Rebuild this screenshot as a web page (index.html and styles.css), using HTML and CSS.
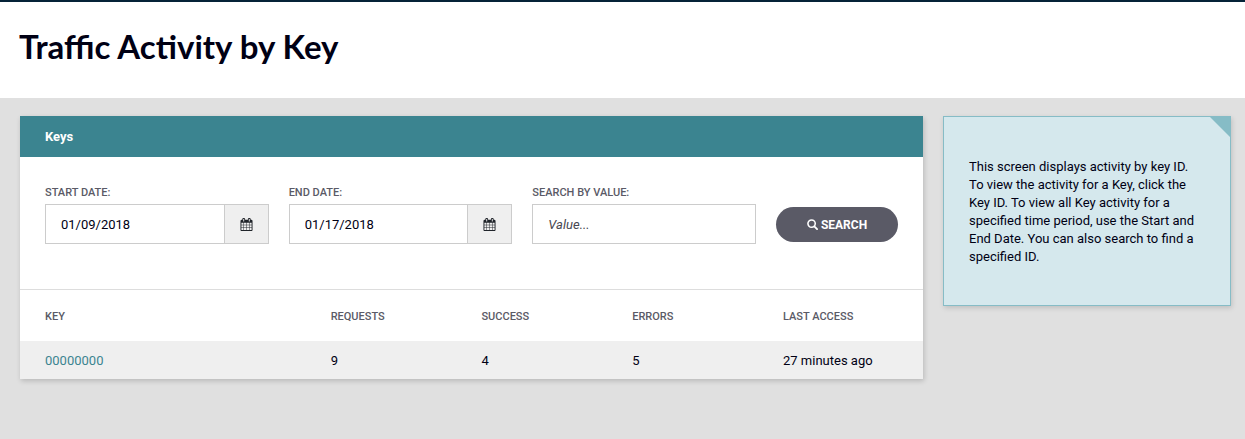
FILE: index.html
```html
<!DOCTYPE html>
<html lang="en">
<head>
<meta charset="utf-8">
<meta name="viewport" content="width=device-width, initial-scale=1">
<title>Traffic Activity by Key</title>
<link rel="stylesheet" href="styles.css">
</head>
<body>
<svg class="sprite" aria-hidden="true">
  <symbol id="calendar" viewBox="0 0 1664 1792">
    <path fill="currentColor" d="M128 1664h288v-288h-288v288zM480 1664h320v-288h-320v288zM128 1312h288v-320h-288v320zM480 1312h320v-320h-320v320zM128 928h288v-288h-288v288zM864 1664h320v-288h-320v288zM480 928h320v-288h-320v288zM1248 1664h288v-288h-288v288zM864 1312h320v-320h-320v320zM512 448v-288q0-13-9.500-22.500t-22.500-9.500h-64q-13 0-22.500 9.500t-9.500 22.500v288q0 13 9.500 22.500t22.500 9.500h64q13 0 22.500-9.500t9.500-22.500zM1248 1312h288v-320h-288v320zM864 928h320v-288h-320v288zM1248 928h288v-288h-288v288zM1280 448v-288q0-13-9.500-22.500t-22.500-9.500h-64q-13 0-22.500 9.500t-9.500 22.500v288q0 13 9.500 22.500t22.500 9.500h64q13 0 22.500-9.500t9.500-22.500zM1664 384v1280q0 52-38 90t-90 38h-1408q-52 0-90-38t-38-90v-1280q0-52 38-90t90-38h128v-96q0-66 47-113t113-47h64q66 0 113 47t47 113v96h384v-96q0-66 47-113t113-47h64q66 0 113 47t47 113v96h128q52 0 90 38t38 90z"/>
  </symbol>
</svg>
<header class="page-header">
  <h1 class="page-title">Traffic Activity by Key</h1>
</header>
<main class="content">
  <section class="card">
    <h2 class="card-title">Keys</h2>
    <form class="filters">
      <div class="field">
        <label class="field-label" for="start">START DATE:</label>
        <div class="input-box">
          <input class="field-input" id="start" type="text" value="01/09/2018">
          <button class="date-button" type="button" aria-label="Choose start date"><svg class="calendar-icon"><use href="#calendar"/></svg></button>
        </div>
      </div>
      <div class="field">
        <label class="field-label" for="end">END DATE:</label>
        <div class="input-box">
          <input class="field-input" id="end" type="text" value="01/17/2018">
          <button class="date-button" type="button" aria-label="Choose end date"><svg class="calendar-icon"><use href="#calendar"/></svg></button>
        </div>
      </div>
      <div class="field">
        <label class="field-label" for="value">SEARCH BY VALUE:</label>
        <div class="input-box">
          <input class="field-input" id="value" type="text" placeholder="Value...">
        </div>
      </div>
      <button class="search-button" type="submit">
        <svg class="search-icon" viewBox="0 0 12 12" aria-hidden="true"><circle cx="5" cy="5" r="4" fill="none" stroke="currentColor" stroke-width="1.700"/><path d="M8 8l3 3" stroke="currentColor" stroke-width="2" stroke-linecap="round"/></svg>
        <span>SEARCH</span>
      </button>
    </form>
    <table class="keys-table">
      <thead>
        <tr><th class="col-key" scope="col">KEY</th><th class="col-count" scope="col">REQUESTS</th><th class="col-count" scope="col">SUCCESS</th><th class="col-count" scope="col">ERRORS</th><th scope="col">LAST ACCESS</th></tr>
      </thead>
      <tbody>
        <tr><td class="col-key"><a class="key-link" href="#">00000000</a></td><td>9</td><td>4</td><td>5</td><td>27 minutes ago</td></tr>
      </tbody>
    </table>
  </section>
  <aside class="note">
    <p class="note-text">This screen displays activity by key ID. To view the activity for a Key, click the Key ID. To view all Key activity for a specified time period, use the Start and End Date. You can also search to find a specified ID.</p>
  </aside>
</main>
</body>
</html>
```
FILE: styles.css
```css
* {
  box-sizing: border-box;
}

body {
  margin: 0;
  min-height: 100vh;
  background: #e0e0e0;
  color: #000014;
  font: 13px/18px Roboto, "Liberation Sans", sans-serif;
}

.sprite {
  display: none;
}

.page-header {
  padding: 23px 19px 31px;
  border-top: 2px solid #052338;
  background: #fff;
}

.page-title {
  margin: 0;
  font: 700 33px/42px Lato, sans-serif;
}

.content {
  display: grid;
  grid-template-columns: minmax(0, 1fr) 288px;
  gap: 20px;
  align-items: start;
  padding: 18px 14px 18px 20px;
}

.card {
  background: #fff;
  box-shadow: 1px 2px 5px rgba(0, 0, 0, 0.18);
}

.card-title {
  margin: 0;
  padding: 12px 25px 11px;
  background: #3b8490;
  color: #fff;
  font-size: 13px;
  font-weight: 700;
  line-height: 18px;
}

.filters {
  display: grid;
  grid-template-columns: repeat(3, minmax(0, 1fr)) 122px;
  gap: 20px;
  align-items: end;
  padding: 27px 25px 45px;
}

.field {
  display: flex;
  flex-direction: column;
  gap: 2px;
}

.field-label {
  color: #5a5a66;
  font-size: 11px;
  font-weight: 500;
}

.input-box {
  display: flex;
  height: 40px;
  border: 1px solid #ccc;
}

.field-input {
  flex: 1;
  min-width: 0;
  padding: 2px 15px 0;
  border: 0;
  background: #fff;
  color: #000014;
  font: inherit;
}

.field-input::placeholder {
  color: #484850;
  font-style: italic;
  opacity: 1;
}

.date-button {
  display: flex;
  align-items: center;
  justify-content: center;
  width: 44px;
  padding: 0;
  border: 0;
  border-left: 1px solid #ccc;
  background: #efefef;
  color: #20242a;
}

.calendar-icon {
  width: 13px;
  height: 13px;
}

.search-button {
  display: flex;
  align-items: center;
  justify-content: center;
  gap: 3px;
  height: 35px;
  margin-bottom: 2px;
  border: 0;
  border-radius: 18px;
  background: #5a5a66;
  color: #fff;
  font: 700 12px/18px Roboto, sans-serif;
}

.search-icon {
  width: 11px;
  height: 11px;
}

.keys-table {
  width: 100%;
  border-collapse: collapse;
  table-layout: fixed;
  border-top: 1px solid #ddd;
  text-align: left;
}

.keys-table th {
  padding: 18px 0 15px;
  color: #5a5a66;
  font-size: 11px;
  font-weight: 500;
}

.keys-table td {
  padding: 11px 0 9px;
  background: #efefef;
}

.keys-table .col-key {
  width: 34.4%;
  padding-left: 25px;
}

.keys-table .col-count {
  width: 16.7%;
}

.key-link {
  color: #3b8490;
  text-decoration: none;
}

.note {
  position: relative;
  padding: 41px 25px 39px;
  border: 1px solid #86bcc6;
  background: #d5e8ed;
  box-shadow: 1px 2px 5px rgba(0, 0, 0, 0.15);
}

.note::after {
  content: "";
  position: absolute;
  top: 0;
  right: 0;
  width: 20px;
  height: 20px;
  background: #86bcc6;
  clip-path: polygon(0 0, 100% 0, 100% 100%);
}

.note-text {
  margin: 0;
}
```
